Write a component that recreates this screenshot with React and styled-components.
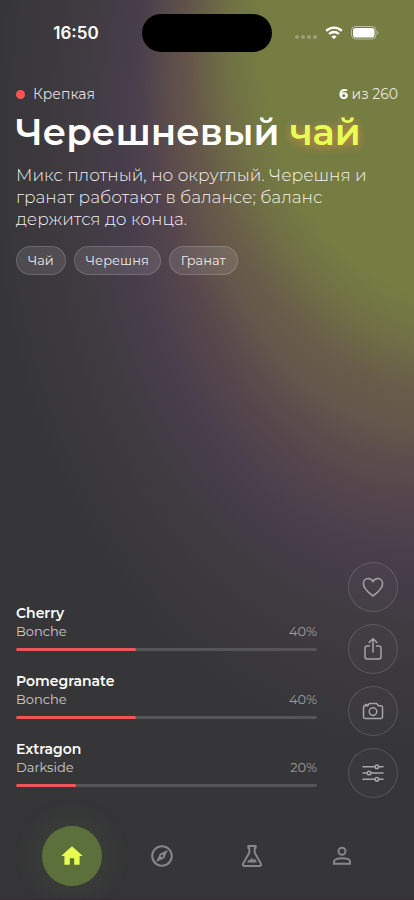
import React from 'react'
import styled, { createGlobalStyle } from 'styled-components'
import { MdHome, MdOutlineExplore } from 'react-icons/md'


const tags = ['Чай', 'Черешня', 'Гранат']

const flavours = [
  { name: 'Cherry', brand: 'Bonche', percent: 40 },
  { name: 'Pomegranate', brand: 'Bonche', percent: 40 },
  { name: 'Extragon', brand: 'Darkside', percent: 20 },
]

const HeartIcon = () => (
  <svg width="24" height="24" viewBox="0 0 24 24">
    <path d="M12 21C9.4 19 2.4 14.200 2.4 8.800C2.4 5.600 4.500 3.500 7.200 3.500C9.300 3.500 11.100 4.700 12 6.600C12.900 4.700 14.700 3.500 16.800 3.500C19.500 3.500 21.600 5.600 21.600 8.800C21.600 14.200 14.600 19 12 21Z" />
  </svg>
)

const ShareIcon = () => (
  <svg width="24" height="24" viewBox="0 0 24 24">
    <path d="M8.500 9H6.200C4.900 9 4 9.900 4 11.200V19.800C4 21.100 4.900 22 6.200 22H17.800C19.100 22 20 21.100 20 19.800V11.200C20 9.900 19.100 9 17.800 9H15.500" />
    <path d="M12 15V1.800M8.200 5.400L12 1.700L15.800 5.400" />
  </svg>
)

const CameraIcon = () => (
  <svg width="24" height="24" viewBox="0 0 24 24">
    <path d="M2.500 8.200C2.500 7.300 3 6.800 3.900 6.800H6.600L8.400 4.500H15.600L17.400 6.800H20.100C21 6.800 21.500 7.300 21.500 8.200V18C21.500 18.900 21 19.400 20.100 19.400H3.900C3 19.400 2.500 18.900 2.500 18Z" />
    <path d="M4.400 6.400V5.600H6" />
    <circle cx="12" cy="12.600" r="3.800" />
  </svg>
)

const SlidersIcon = () => (
  <svg width="24" height="24" viewBox="0 0 24 24">
    <path d="M2 5.800H14M17.800 5.800H22M2 12H6.200M10 12H22M2 18.200H14M17.800 18.200H22" />
    <circle cx="15.900" cy="5.800" r="1.800" />
    <circle cx="8.100" cy="12" r="1.800" />
    <circle cx="15.900" cy="18.200" r="1.800" />
  </svg>
)

const FlaskIcon = () => (
  <svg width="26" height="26" viewBox="0 0 26 26">
    <path
      d="M9.300 2.900H16.700V5.100H15.700V9.800L21.700 20.200C22.600 21.800 22 23.100 20.300 23.100H5.700C4 23.100 3.400 21.800 4.300 20.200L10.300 9.800V5.100H9.300Z"
      fill="none"
      stroke="currentColor"
      strokeWidth="2"
      strokeLinejoin="round"
    />
    <path d="M8 19.600L10 16.600L11.200 17.200L12.400 14.600L14 16.800L16 15.800L18 19.600Z" fill="currentColor" />
  </svg>
)

const PersonIcon = () => (
  <svg width="26" height="26" viewBox="0 0 26 26" fill="none" stroke="currentColor" strokeWidth="2">
    <circle cx="13" cy="8.200" r="3.500" />
    <path d="M5 20.800V18.600C5 16.500 8.600 15.200 13 15.200S21 16.500 21 18.600V20.800Z" />
  </svg>
)

const WifiIcon = () => (
  <svg width="18" height="14" viewBox="0 0 18 14" fill="none" stroke="#fff" strokeWidth="2.300">
    <path d="M1.200 4.900C5.600 0.600 12.400 0.600 16.800 4.900" />
    <path d="M4.100 8C6.900 5.300 11.100 5.300 13.900 8" />
    <path d="M9 13.200L6.300 10.500C7.800 9.100 10.200 9.100 11.700 10.500Z" fill="#fff" stroke="none" />
  </svg>
)

const BatteryIcon = () => (
  <svg width="28" height="14" viewBox="0 0 28 14">
    <rect x="0.500" y="0.500" width="24.500" height="12.500" rx="4" fill="none" stroke="#fff" strokeOpacity="0.500" />
    <rect x="2" y="2" width="21.500" height="9.500" rx="2.800" fill="#fff" />
    <path d="M26.300 4.800C27.700 5.300 27.700 8.200 26.300 8.700Z" fill="#fff" fillOpacity="0.500" />
  </svg>
)

const actions = [
  { label: 'Нравится', Icon: HeartIcon },
  { label: 'Поделиться', Icon: ShareIcon },
  { label: 'Фото', Icon: CameraIcon },
  { label: 'Настройки', Icon: SlidersIcon },
]

const links = [
  { label: 'Главная', href: '#home', icon: <MdHome size={26} />, active: true },
  { label: 'Обзор', href: '#explore', icon: <MdOutlineExplore size={26} /> },
  { label: 'Миксы', href: '#mixes', icon: <FlaskIcon /> },
  { label: 'Профиль', href: '#profile', icon: <PersonIcon /> },
]


function App() {
  return (
    <>
      <GlobalStyle />
      <Screen>
        <StatusBar>
          <Time>16:50</Time>
          <Island />
          <StatusIcons>
            <Signal>
              <i /><i /><i /><i />
            </Signal>
            <WifiIcon />
            <BatteryIcon />
          </StatusIcons>
        </StatusBar>

        <Content>
          <Meta>
            <Strength>Крепкая</Strength>
            <span><b>6</b> из 260</span>
          </Meta>
          <Title>Черешневый <em>чай</em></Title>
          <Description>
            Микс плотный, но округлый. Черешня и гранат работают в балансе; баланс держится до конца.
          </Description>
          <Tags>
            {tags.map((tag) => <Tag key={tag}>{tag}</Tag>)}
          </Tags>

          <Bottom>
            <Flavours>
              {flavours.map(({ name, brand, percent }) => (
                <li key={name}>
                  <FlavourName>{name}</FlavourName>
                  <FlavourRow>
                    <span>{brand}</span>
                    <Percent>{percent}%</Percent>
                  </FlavourRow>
                  <Track role="progressbar" aria-label={name} aria-valuenow={percent}>
                    <Fill style={{ width: `${percent}%` }} />
                  </Track>
                </li>
              ))}
            </Flavours>
            <Actions>
              {actions.map(({ label, Icon }) => (
                <ActionButton key={label} type="button" aria-label={label}>
                  <Icon />
                </ActionButton>
              ))}
            </Actions>
          </Bottom>
        </Content>

        <TabBar>
          {links.map(({ label, href, icon, active }) => (
            <TabLink key={href} href={href} aria-label={label} $active={active}>
              {icon}
            </TabLink>
          ))}
        </TabBar>
      </Screen>
    </>
  )
}

const GlobalStyle = createGlobalStyle`
* {
  box-sizing: border-box;
  margin: 0;
  padding: 0;
}

body {
  background: #363638;
  color: #fff;
  font-family: Montserrat, Inter, "Noto Sans", sans-serif;
  -webkit-font-smoothing: antialiased;
}

ul {
  list-style: none;
}
`

const Screen = styled.div`
  display: flex;
  flex-direction: column;
  min-height: 100vh;
  border-bottom: 2px solid #3a2e35;
  background:
    radial-gradient(ellipse 74% 47% at 109% 4%, #757d42 62%, rgba(117, 121, 67, 0.8) 72%, rgba(112, 100, 72, 0.45) 86%, rgba(96, 76, 76, 0) 102%),
    radial-gradient(ellipse 102% 66% at 100% 17%, #61544c 46%, #56464c 58%, #483e4c 68%, #403b41 80%, #363638 100%);
`

const StatusBar = styled.div`
  display: grid;
  grid-template-columns: 1fr 130px 1fr;
  align-items: center;
  padding-top: 14px;
`

const Time = styled.span`
  padding-left: 10px;
  text-align: center;
  font-family: Inter, sans-serif;
  font-size: 17px;
  font-weight: 600;
`

const Island = styled.div`
  height: 38px;
  border-radius: 19px;
  background: #000;
`

const StatusIcons = styled.div`
  display: flex;
  align-items: center;
  justify-content: center;
  gap: 8px;
  padding-right: 12px;
`

const Signal = styled.span`
  display: flex;
  gap: 2px;
  padding-top: 8px;

  i {
    width: 4px;
    height: 4px;
    border-radius: 50%;
    background: rgba(255, 255, 255, 0.28);
  }
`

const Content = styled.main`
  flex: 1;
  display: flex;
  flex-direction: column;
  padding: 32px 16px 0;
`

const Meta = styled.div`
  display: flex;
  align-items: center;
  justify-content: space-between;
  font-size: 14px;
  line-height: 20px;
  color: rgba(255, 255, 255, 0.85);

  b {
    font-weight: 700;
    color: #fff;
  }
`

const Strength = styled.span`
  display: flex;
  align-items: center;
  gap: 8px;

  &::before {
    content: '';
    width: 9px;
    height: 9px;
    border-radius: 50%;
    background: #ff5252;
  }
`

const Title = styled.h1`
  margin-top: 6px;
  font-size: 37px;
  font-weight: 600;
  line-height: 44px;
  white-space: nowrap;

  em {
    font-style: normal;
    color: #e6ff50;
    text-shadow: 0 2px 10px rgba(255, 150, 80, 0.7);
  }
`

const Description = styled.p`
  margin-top: 10px;
  font-size: 17px;
  font-weight: 300;
  line-height: 22px;
  color: rgba(255, 255, 255, 0.95);
`

const Tags = styled.ul`
  display: flex;
  gap: 8px;
  margin-top: 16px;
`

const Tag = styled.li`
  padding: 0 11px;
  border: 1px solid rgba(255, 255, 255, 0.16);
  border-radius: 15px;
  background: rgba(255, 255, 255, 0.1);
  font-size: 13px;
  line-height: 27px;
  color: rgba(255, 255, 255, 0.9);
`

const Bottom = styled.div`
  display: flex;
  align-items: flex-end;
  gap: 31px;
  margin-top: auto;
`

const Flavours = styled.ul`
  flex: 1;
  display: flex;
  flex-direction: column;
  gap: 21px;
  padding-bottom: 11px;
`

const FlavourName = styled.h2`
  font-size: 14px;
  font-weight: 600;
  line-height: 18px;
`

const FlavourRow = styled.div`
  display: flex;
  justify-content: space-between;
  font-size: 13px;
  line-height: 18px;
  color: rgba(255, 255, 255, 0.75);
`

const Percent = styled.span`
  color: rgba(255, 255, 255, 0.5);
`

const Track = styled.div`
  height: 3px;
  margin-top: 8px;
  border-radius: 2px;
  background: #555557;
  overflow: hidden;
`

const Fill = styled.div`
  height: 100%;
  border-radius: 2px;
  background: #f25557;
`

const Actions = styled.div`
  display: flex;
  flex-direction: column;
  gap: 12px;
`

const ActionButton = styled.button`
  display: flex;
  align-items: center;
  justify-content: center;
  width: 50px;
  height: 50px;
  border: 1px solid rgba(255, 255, 255, 0.14);
  border-radius: 50%;
  background: rgba(255, 255, 255, 0.02);
  color: #a5a4a6;
  cursor: pointer;

  svg {
    fill: none;
    stroke: currentColor;
    stroke-width: 1.5;
    stroke-linecap: round;
    stroke-linejoin: round;
  }
`

const TabBar = styled.nav`
  display: flex;
  justify-content: space-around;
  padding: 28px 27px 12px;
`

const TabLink = styled.a`
  display: flex;
  align-items: center;
  justify-content: center;
  width: 60px;
  height: 60px;
  border-radius: 50%;
  color: ${({ $active }) => ($active ? '#e6ff50' : '#878789')};
  background: ${({ $active }) => ($active ? '#5c703c' : 'transparent')};
  box-shadow: ${({ $active }) => ($active ? '0 0 28px rgba(92, 112, 60, 0.25)' : 'none')};
`

export default App
